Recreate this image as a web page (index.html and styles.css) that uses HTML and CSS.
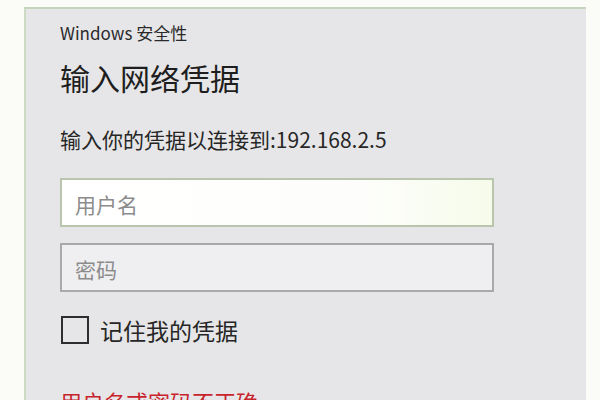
FILE: index.html
```html
<!DOCTYPE html>
<html lang="zh-CN">
<head>
<meta charset="utf-8">
<title>Windows 安全性</title>
<link rel="stylesheet" href="styles.css">
</head>
<body>
<div class="dialog">
  <div class="app-name">Windows 安全性</div>
  <div class="title">输入网络凭据</div>
  <div class="prompt">输入你的凭据以连接到:192.168.2.5</div>
  <input class="field field-user" type="text" placeholder="用户名">
  <input class="field field-pass" type="password" placeholder="密码">
  <label class="remember"><span class="box"></span><span class="remember-text">记住我的凭据</span></label>
  <div class="error">用户名或密码不正确</div>
</div>
</body>
</html>
```

FILE: styles.css
```css
html, body {
  margin: 0;
  padding: 0;
  width: 600px;
  height: 400px;
  overflow: hidden;
  background: #fbfcf8;
}
body {
  font-family: "Noto Sans CJK SC", "Noto Sans", sans-serif;
  color: #262626;
}
.dialog {
  box-sizing: border-box;
  margin: 7px 0 0 24px;
  width: 562px;
  height: 393px;
  overflow: hidden;
  background: #e6e6e8;
  border-top: 2px solid #c3d5bb;
  border-left: 2px solid #cbdbc4;
  padding-left: 34px;
  display: flex;
  flex-direction: column;
  align-items: flex-start;
}
.dialog > * {
  flex-shrink: 0;
}
.app-name {
  margin-top: 14px;
  font-size: 17px;
  line-height: 20px;
  color: #2a2a2a;
}
.title {
  margin-top: 16px;
  font-size: 30px;
  line-height: 36px;
  color: #1e1e1e;
}
.prompt {
  margin-top: 31px;
  font-size: 21px;
  line-height: 26px;
  color: #262626;
}
.field {
  box-sizing: border-box;
  width: 434px;
  height: 49px;
  margin: 0;
  padding: 3px 13px 0;
  font-family: inherit;
  font-size: 21px;
  outline: none;
}
.field::placeholder {
  color: #8c8c8c;
}
.field-user {
  margin-top: 26px;
  border: 2px solid #b9c6ad;
  background: linear-gradient(90deg, #ffffff 0%, #fdfefb 70%, #f6fbea 100%);
}
.field-pass {
  margin-top: 16px;
  border: 2px solid #a9a9ab;
  background: #efeff1;
}
.remember {
  margin-top: 24px;
  display: flex;
  align-items: center;
  gap: 11px;
}
.box {
  box-sizing: border-box;
  width: 28px;
  height: 28px;
  border: 2px solid #2e2e2e;
  margin-left: 1px;
}
.remember-text {
  font-size: 23px;
  line-height: 28px;
  color: #262626;
}
.error {
  margin-top: 43px;
  font-size: 22px;
  line-height: 28px;
  color: #c8242c;
}
```
